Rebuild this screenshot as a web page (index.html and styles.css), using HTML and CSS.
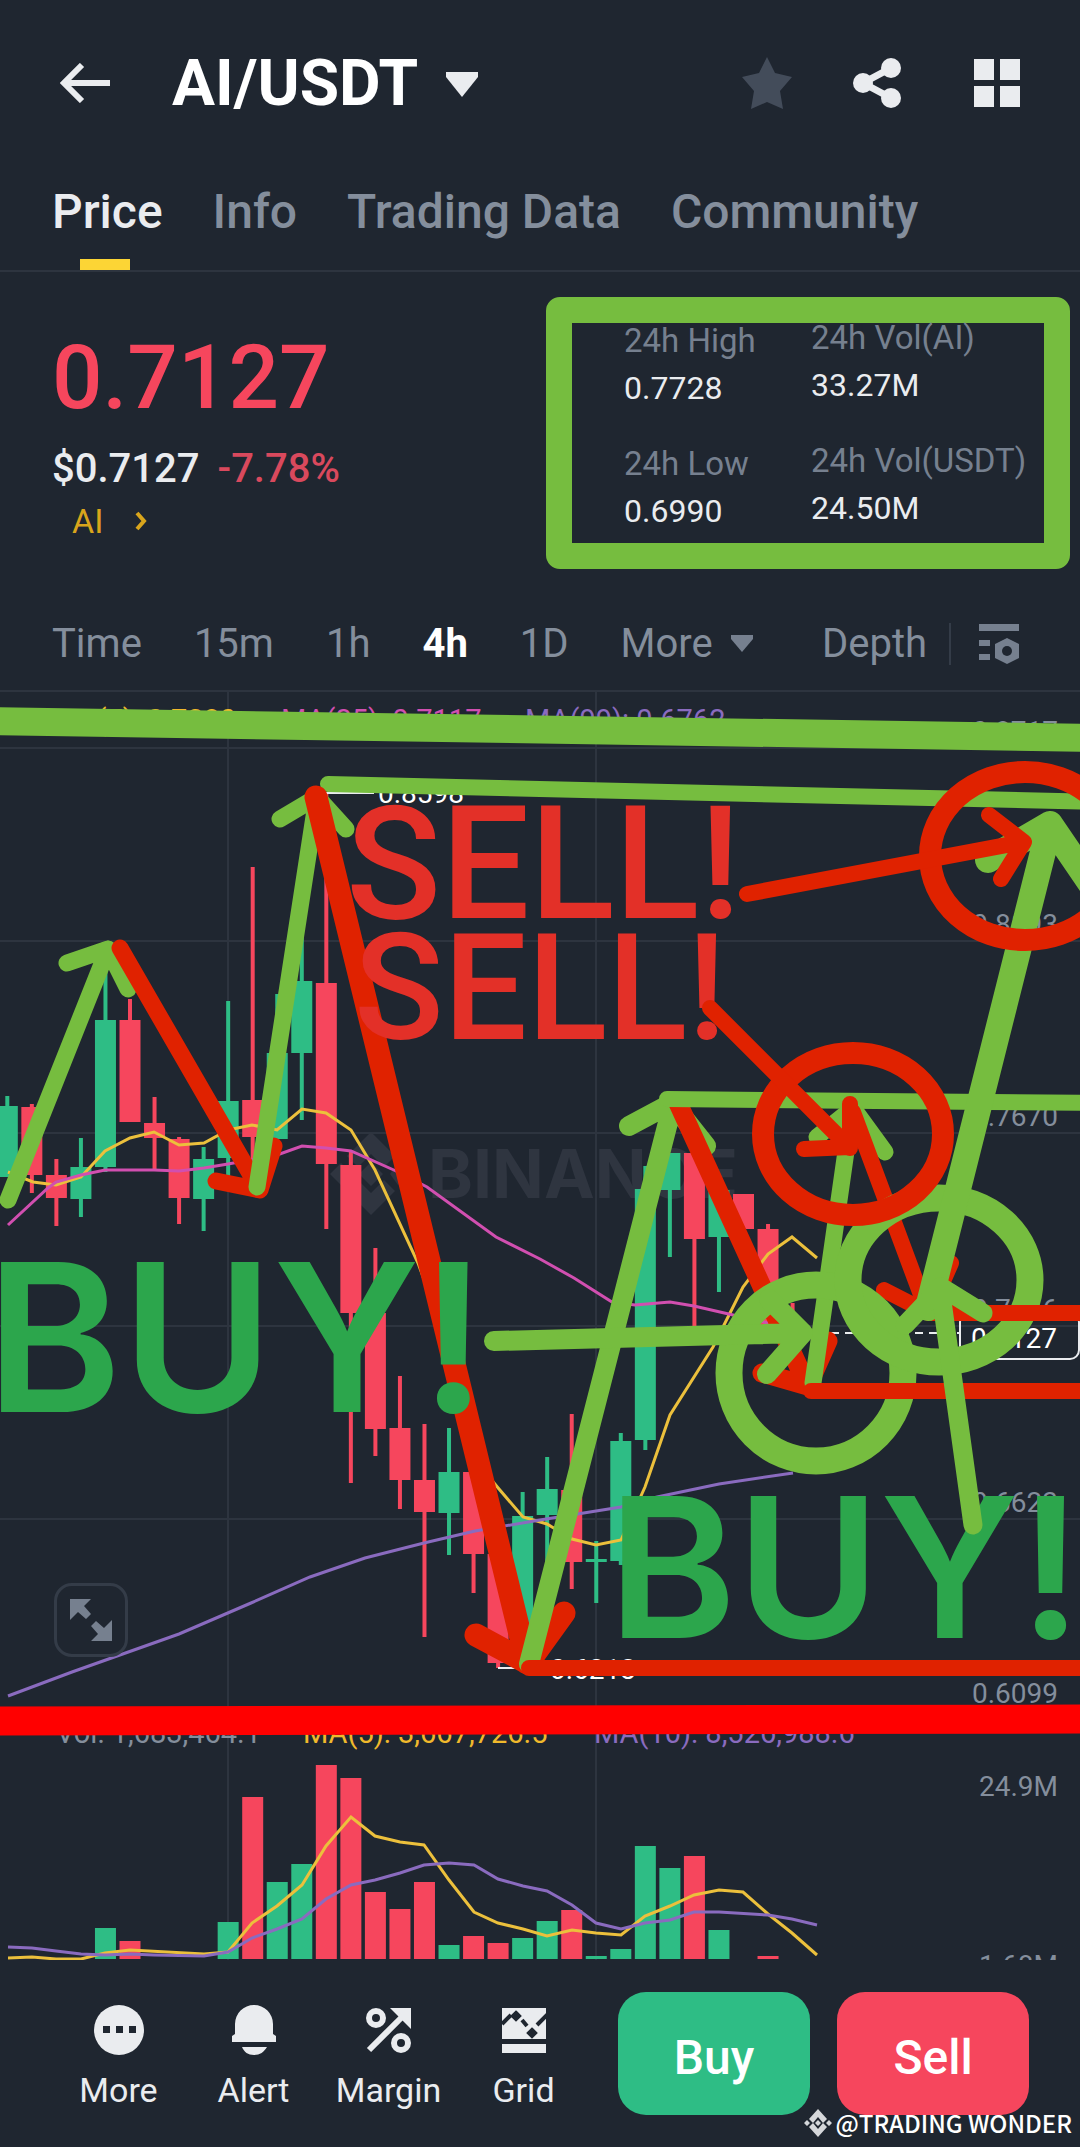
FILE: index.html
```html
<!DOCTYPE html>
<html lang="en">
<head>
<meta charset="utf-8">
<meta name="viewport" content="width=device-width, initial-scale=1">
<title>AI/USDT</title>
<link rel="stylesheet" href="styles.css">
</head>
<body>
<div class="app">
  <header class="topbar">
    <button class="icon-btn" aria-label="Back">
      <svg width="50" height="40" viewBox="0 0 50 40"><path d="M50 20H6M22 2L4 20l18 18" fill="none" stroke="#eaecef" stroke-width="6"/></svg>
    </button>
    <button class="pair">AI/USDT
      <svg width="32" height="25" viewBox="0 0 32 25"><path d="M0 0h32v5L16 25 0 5z" fill="#eaecef"/></svg>
    </button>
    <div class="actions">
      <button class="icon-btn" aria-label="Favourite">
        <svg width="50" height="52" viewBox="0 0 50 52"><path d="M25 0l8 16 17 4-12 14 3 18-16-7-16 7 3-18L0 20l17-4z" fill="#434c5a"/></svg>
      </button>
      <button class="icon-btn" aria-label="Share">
        <svg width="50" height="52" viewBox="0 0 50 52"><path d="M39 11L11 26l28 15" fill="none" stroke="#eaecef" stroke-width="7"/><g fill="#eaecef"><circle cx="39" cy="11" r="10"/><circle cx="11" cy="26" r="10"/><circle cx="39" cy="41" r="10"/></g></svg>
      </button>
      <button class="icon-btn" aria-label="Layout">
        <svg width="46" height="48" viewBox="0 0 46 48"><path d="M0 0h20v21H0zM26 0h20v21H26zM0 27h20v21H0zM26 27h20v21H26z" fill="#eaecef"/></svg>
      </button>
    </div>
  </header>

  <nav class="tabs">
    <a href="#price" class="tab tab-on">Price</a>
    <a href="#info" class="tab">Info</a>
    <a href="#data" class="tab">Trading Data</a>
    <a href="#community" class="tab">Community</a>
  </nav>

  <section class="summary">
    <div class="quote">
      <div class="last">0.7127</div>
      <div class="sub"><span>$0.7127</span><span class="down">-7.78%</span></div>
      <a class="tag" href="#ai">AI <svg width="12" height="20" viewBox="0 0 12 20"><path d="M2 2l7 8-7 8" fill="none" stroke="#d9a51c" stroke-width="4"/></svg></a>
    </div>
    <dl class="stats">
      <div class="col">
        <div><dt>24h High</dt><dd>0.7728</dd></div>
        <div><dt>24h Low</dt><dd>0.6990</dd></div>
      </div>
      <div class="col col-raised">
        <div><dt>24h Vol(AI)</dt><dd>33.27M</dd></div>
        <div><dt>24h Vol(USDT)</dt><dd>24.50M</dd></div>
      </div>
    </dl>
  </section>

  <div class="intervals">
    <button>Time</button>
    <button>15m</button>
    <button>1h</button>
    <button class="on">4h</button>
    <button>1D</button>
    <button>More <svg width="22" height="17" viewBox="0 0 22 17"><path d="M0 0h22v4L11 17 0 4z" fill="#76808f"/></svg></button>
    <button class="depth">Depth</button>
    <span class="rule"></span>
    <button aria-label="Chart settings"><svg width="40" height="40" viewBox="0 0 40 40"><path d="M0 0h40v7H0zM0 16h11v6H0zM0 30h11v6H0zM28 14l12 6v14l-12 6-12-6V20z" fill="#76808f"/><circle cx="28" cy="27" r="5" fill="#1f2630"/></svg></button>
  </div>

  <section class="chart">
    <svg class="plot" viewBox="0 690 1080 1270">
      <g class="grid"><path d="M0 691H1080M0 748H1080M0 941H1080M0 1133H1080M0 1326H1080M0 1519H1080M228 691V1960M596 691V1960"/></g>
      <g class="brand">
        <path d="M347 1156l24-24 24 24-11 11-13-13-13 13zM347 1191l24 24 24-24-11-11-13 13-13-13zM371 1162l12 12-12 12-12-12zM330 1174l11-11 11 11-11 11zM390 1174l8-11 11 11-11 11z"/>
        <text x="428" y="1198">BINANCE</text>
      </g>
      <g class="axis">
        <text x="1058" y="741">0.8717</text>
        <text x="1058" y="934">0.8193</text>
        <text x="1058" y="1126">0.7670</text>
        <text x="1058" y="1319">0.7146</text>
        <text x="1058" y="1512">0.6623</text>
        <text x="1058" y="1703">0.6099</text>
        <text x="1058" y="1796">24.9M</text>
        <text x="1058" y="1975">1.68M</text>
      </g>
      <g id="candles"></g>
      <g class="ma">
        <polyline class="y" points="8,1172 33,1182 56,1185 81,1177 105,1151 130,1138 154,1132 179,1145 204,1143 228,1130 252,1125 277,1130 302,1109 326,1113 351,1130 375,1170 418,1263 450,1350 475,1460 499,1489 523,1517 547,1524 572,1539 596,1545 621,1540 645,1487 670,1415 713,1347 743,1287 768,1254 792,1237 817,1258"/>
        <polyline class="m" points="8,1225 48,1188 56,1182 81,1175 105,1170 154,1170 179,1171 204,1168 228,1164 277,1155 302,1146 326,1148 351,1151 396,1171 427,1187 496,1237 540,1259 574,1278 612,1302 635,1305 670,1302 694,1306 733,1315 768,1323"/>
        <polyline class="v" points="8,1696 72,1672 179,1634 251,1603 310,1577 365,1558 424,1543 475,1531 540,1520 621,1507 657,1497 719,1484 793,1473"/>
        <polyline class="y" points="8,1958 32,1957 56,1959 81,1959 105,1953 130,1950 204,1954 228,1952 252,1923 277,1906 302,1885 326,1846 351,1817 375,1836 400,1842 424,1845 449,1880 474,1912 498,1923 523,1929 547,1936 572,1930 596,1933 621,1935 645,1916 670,1906 694,1895 719,1890 743,1892 768,1914 792,1933 817,1955"/>
        <polyline class="v" points="8,1947 32,1948 56,1951 81,1954 105,1955 130,1954 154,1955 204,1956 228,1952 252,1938 277,1929 302,1919 326,1899 351,1885 375,1880 400,1873 424,1865 449,1863 474,1865 498,1879 523,1886 547,1891 572,1905 596,1923 621,1929 645,1923 670,1920 694,1912 719,1912 768,1915 792,1919 817,1925"/>
      </g>
      <g class="legend">
        <text x="52" y="730" class="ty">MA(7): 0.7380</text>
        <text x="281" y="730" class="tm">MA(25): 0.7117</text>
        <text x="525" y="730" class="tv">MA(99): 0.6762</text>
        <text x="56" y="1743" class="tg">Vol: 1,683,464.1</text>
        <text x="303" y="1743" class="ty">MA(5): 3,667,726.5</text>
        <text x="594" y="1743" class="tv">MA(10): 8,526,988.6</text>
      </g>
      <g class="marks">
        <path d="M326 793H374M498 1668H546"/>
        <path d="M817 1333H960" stroke-dasharray="8 6"/>
        <rect x="960" y="1313" width="119" height="46" rx="9"/>
        <text x="378" y="803">0.8598</text>
        <text x="550" y="1679">0.6213</text>
        <text x="971" y="1348">0.7127</text>
      </g>

      <g class="ink">
        <path class="g" stroke-width="28" d="M-20 721L1100 738"/>
        <path class="g" stroke-width="17" d="M8 1200L108 949M67 963L108 949L128 989"/>
        <path class="r" stroke-width="17" d="M120 948L259 1189M216 1181L260 1190L274 1146"/>
        <path class="g" stroke-width="17" d="M257 1187L317 797M280 819L317 797L346 829"/>
        <path class="g" stroke-width="16" d="M328 784L540 789L1100 802"/>
        <path class="r" stroke-width="23" d="M316 797L527 1663M476 1635L528 1663L564 1613"/>
        <path class="g" stroke-width="20" d="M529 1664L673 1103M629 1126L672 1103L706 1146"/>
        <path class="r" stroke-width="19" d="M678 1103L806 1383M762 1373L808 1386L828 1341"/>
        <path class="g" stroke-width="16" d="M667 1099L1100 1103"/>
        <path class="g" stroke-width="17" d="M813 1383L852 1109M817 1137L853 1108L885 1152"/>
        <path class="r" stroke-width="16" d="M853 1112L927 1311M884 1290L929 1313L951 1263"/>
        <ellipse class="g" stroke-width="27" cx="816" cy="1373" rx="87" ry="88"/>
        <ellipse class="g" stroke-width="27" cx="939" cy="1280" rx="91" ry="82"/>
        <path class="r" stroke-width="16" d="M811 1391H1100M529 1668H1100M929 1313H1100"/>
        <path class="g" stroke-width="26" d="M928 1308L1050 824M988 860L1050 824L1095 890"/>
        <text class="sell sell-far" x="346" y="918">SELL!</text>
        <text class="sell sell-near" x="354" y="1039">SELL!</text>
        <text class="buy buy-left" x="-14" y="1412">BUY!</text>
        <text class="buy buy-right" x="608" y="1638">BUY!</text>
        <ellipse class="r" stroke-width="22" cx="853" cy="1134" rx="90" ry="81"/>
        <ellipse class="r" stroke-width="22" cx="1025" cy="856" rx="95" ry="84"/>
        <path class="r" stroke-width="16" d="M710 1008L850 1148M804 1149L850 1147V1104M747 894L1023 842M989 815L1024 842L1001 879"/>
        <path class="g" stroke-width="20" d="M494 1341L802 1333M769 1299L803 1333L767 1374"/>
        <path class="g" stroke-width="19" d="M973 1525L940 1287M905 1325L941 1287L983 1313"/>
        <path class="stop" stroke-width="29" d="M-20 1721L1100 1719"/>
      </g>
    </svg>
    <button class="expand" aria-label="Full screen">
      <svg width="42" height="42" viewBox="0 0 42 42"><path d="M0 0h21l-7 7 7 8-5 5-8-7-8 8zM42 42H21l7-7-7-8 5-5 8 7 8-8z" fill="#76808f"/></svg>
    </button>
  </section>

  <footer class="dock">
    <button class="tool"><svg width="50" height="50" viewBox="0 0 50 50"><circle cx="25" cy="25" r="25" fill="#eaecef"/><path d="M9 21h7v7H9zM22 21h7v7h-7zM35 21h7v7h-7z" fill="#1f2630"/></svg>More</button>
    <button class="tool"><svg width="50" height="50" viewBox="0 0 50 50"><path d="M6 29V19a19 19 0 0 1 38 0v10l3 2v6H3v-6l3-2zM13 42h25c-3 5-7 8-13 8s-10-3-12-8z" fill="#eaecef"/></svg>Alert</button>
    <button class="tool"><svg width="50" height="50" viewBox="0 0 50 50"><g fill="none" stroke="#eaecef" stroke-width="6"><circle cx="12" cy="13" r="7"/><circle cx="37" cy="38" r="7"/><path d="M5 45L38 12"/></g><path d="M26 3h21v21z" fill="#eaecef"/></svg>Margin</button>
    <button class="tool"><svg width="50" height="50" viewBox="0 0 50 50"><path d="M3 3h44v31H3zM3 39h44v9H3z" fill="#eaecef"/><path d="M3 19l9-9M38 20l11-11M17 8l3 3-3 3-3-3zM23 15l5 6M33 25l3 3-3 3-3-3z" stroke="#1f2630" stroke-width="4" fill="#1f2630"/></svg>Grid</button>
    <button class="trade buy-btn">Buy</button>
    <button class="trade sell-btn">Sell</button>
  </footer>

  <div class="credit">
    <svg width="28" height="28" viewBox="0 0 28 28"><path d="M5 10l9-10 9 10-4 4-5-6-5 6zM5 18l9 10 9-10-4-4-5 6-5-6zM14 11l3 3-3 3-3-3zM0 14l3-3 3 3-3 3zM22 14l3-3 3 3-3 3z" fill="#d5d7da"/></svg>
    <span>@TRADING WONDER</span>
  </div>
</div>
<script src="chart.js"></script>
</body>
</html>
```
FILE: styles.css
```css
* { box-sizing: border-box; }
body { margin: 0; background: #1f2630; color: #eaecef; font-family: Roboto, "Noto Sans", sans-serif; }
button { background: none; border: 0; padding: 0; margin: 0; color: inherit; font: inherit; }
a { color: inherit; text-decoration: none; }
svg { display: block; flex: none; }
.app { position: relative; }

.topbar { display: flex; align-items: center; height: 166px; padding: 0 60px; }
.pair { display: flex; align-items: center; gap: 28px; margin-left: 62px; padding-top: 2px; font-size: 64px; font-weight: 700; line-height: 72px; color: #fff; }
.actions { display: flex; align-items: center; gap: 60px; margin-left: auto; }
.actions .icon-btn:last-child { margin-left: 12px; }

.tabs { display: flex; gap: 50px; height: 106px; padding: 18px 52px 0; border-bottom: 2px solid #2d343f; font-size: 48px; font-weight: 500; line-height: 56px; color: #848e9c; }
.tab { position: relative; }
.tab-on { color: #eaecef; }
.tab-on::after { content: ""; position: absolute; left: 50%; bottom: 0; width: 50px; margin-left: -27px; height: 11px; background: #fcd535; }

.summary { display: flex; justify-content: space-between; padding: 25px 10px 0 52px; height: 325px; }
.quote { padding-top: 28px; }
.last { font-size: 89px; font-weight: 500; line-height: 106px; color: #f6465d; }
.sub { display: flex; gap: 18px; font-size: 40px; line-height: 48px; font-weight: 500; margin-top: 14px; }
.down { color: #d9495d; }
.tag { display: flex; align-items: center; gap: 32px; margin: 8px 0 0 20px; font-size: 34px; line-height: 40px; color: #d9a51c; }
.stats { display: flex; gap: 56px; margin: 0; width: 524px; height: 272px; border: 26px solid #76bd3f; border-radius: 14px; padding: 0 0 0 52px; white-space: nowrap; }
.col { display: flex; flex-direction: column; gap: 34px; width: 131px; margin-top: -2px; }
.col-raised { margin-top: -5px; }
.stats dt { font-size: 33px; line-height: 40px; color: #76808f; }
.stats dd { margin: 0; padding-top: 5px; font-size: 32px; line-height: 44px; }

.intervals { display: flex; align-items: center; height: 93px; padding: 0 61px 0 52px; gap: 52px; font-size: 40px; line-height: 48px; color: #848e9c; }
.intervals button { display: flex; align-items: center; gap: 18px; }
.intervals .on { color: #fff; font-weight: 700; }
.intervals .depth { margin-left: auto; }
.rule { flex: none; width: 2px; height: 42px; margin: 0 -24px 0 -30px; background: #343c48; }

.chart { position: relative; }
.plot { width: 100%; height: auto; overflow: hidden; }
.plot text { font-size: 28px; }
.grid path { stroke: #2d343f; stroke-width: 2; }
.brand { fill: #2f3540; }
.plot .brand text { font-family: Inter, sans-serif; font-size: 68px; font-weight: 700; }
.axis { fill: #848e9c; text-anchor: end; }
.up { fill: #2ebd85; }
.dn { fill: #f6465d; }
.ma { fill: none; stroke-width: 3; }
.ma .y { stroke: #ecc03c; }
.ma .m { stroke: #d14fb0; }
.ma .v { stroke: #8a6bbf; }
.plot .legend text { font-size: 29px; }
.ty { fill: #f0b92c; }
.tm { fill: #d14fb0; }
.tv { fill: #8a6bbf; }
.tg { fill: #848e9c; }
.marks { fill: none; stroke: #eaecef; stroke-width: 2; }
.marks text { fill: #fff; stroke: none; }
.ink { fill: none; stroke-linecap: round; stroke-linejoin: round; }
.ink .g { stroke: #76bd3f; }
.ink .r { stroke: #e02200; }
.ink .stop { stroke: #f00; }
.ink .sell { fill: #e33028; font-weight: 500; }
.ink .buy { fill: #2ca64c; font-family: Inter, sans-serif; font-weight: 600; }
.ink .sell-far { font-size: 157px; }
.ink .sell-near { font-size: 148px; }
.ink .buy-left { font-size: 206px; }
.ink .buy-right { font-size: 195px; }
.expand { position: absolute; left: 54px; top: 893px; width: 74px; height: 74px; display: flex; align-items: center; justify-content: center; border: 3px solid #343c48; border-radius: 18px; }

.dock { display: flex; align-items: flex-start; height: 187px; padding: 32px 51px 0 51px; font-size: 34px; line-height: 40px; }
.tool { display: flex; flex-direction: column; align-items: center; gap: 15px; width: 135px; padding-top: 13px; }
.trade { flex: 1; height: 123px; padding-top: 8px; border-radius: 28px; font-size: 48px; font-weight: 500; color: #fff; }
.buy-btn { margin-left: 27px; background: #2ebd85; }
.sell-btn { margin-left: 27px; background: #f6465d; }
.credit { position: absolute; right: 8px; bottom: 6px; display: flex; align-items: center; gap: 4px; font-family: "Noto Sans CJK SC", sans-serif; font-size: 24px; line-height: 36px; font-weight: 500; color: #fff; }
```
FILE: chart.js
```javascript
// One candle per row: [slot, direction, body top, body bottom, wick top, wick bottom]
const candles = [
  [0, 1, 1106, 1177, 1096, 1177], [1, 0, 1107, 1175, 1104, 1193], [2, 0, 1175, 1198, 1159, 1226],
  [3, 1, 1167, 1199, 1138, 1217], [4, 1, 1020, 1167, 950, 1172], [5, 0, 1020, 1122, 999, 1122],
  [6, 0, 1123, 1138, 1097, 1170], [7, 0, 1139, 1198, 1137, 1224], [8, 1, 1159, 1199, 1147, 1231],
  [9, 1, 1101, 1158, 1001, 1180], [10, 0, 1100, 1137, 867, 1180], [11, 1, 1053, 1139, 994, 1139],
  [12, 1, 981, 1053, 900, 1120], [13, 0, 983, 1164, 793, 1229], [14, 0, 1165, 1313, 1152, 1483],
  [15, 0, 1313, 1429, 1248, 1456], [16, 0, 1428, 1480, 1376, 1509], [17, 0, 1480, 1512, 1424, 1637],
  [18, 1, 1472, 1513, 1428, 1555], [19, 0, 1472, 1554, 1472, 1593], [20, 0, 1554, 1663, 1554, 1668],
  [21, 1, 1516, 1655, 1492, 1655], [22, 1, 1489, 1515, 1457, 1580], [23, 0, 1490, 1562, 1414, 1589],
  [24, 1, 1559, 1562, 1541, 1603], [25, 1, 1441, 1561, 1433, 1565], [26, 1, 1189, 1440, 1166, 1450],
  [27, 1, 1153, 1190, 1153, 1257], [28, 0, 1153, 1239, 1153, 1328], [29, 1, 1190, 1237, 1190, 1292],
  [30, 0, 1194, 1229, 1194, 1229], [31, 0, 1229, 1326, 1224, 1326], [32, 0, 1326, 1344, 1303, 1344]
];
// Volume bars: [slot, direction, top]
const volumes = [
  [4, 1, 1928], [5, 0, 1941], [9, 1, 1922], [10, 0, 1797], [11, 1, 1882], [12, 1, 1864], [13, 0, 1765],
  [14, 0, 1778], [15, 0, 1892], [16, 0, 1909], [17, 0, 1882], [18, 1, 1945], [19, 0, 1936], [20, 0, 1943],
  [21, 1, 1938], [22, 1, 1921], [23, 0, 1910], [24, 1, 1956], [25, 1, 1949], [26, 1, 1846], [27, 1, 1868],
  [28, 0, 1856], [29, 1, 1930], [31, 0, 1956]
];
const layer = document.getElementById('candles');
function bar(x, y, w, h, up) {
  const r = document.createElementNS('http://www.w3.org/2000/svg', 'rect');
  r.setAttribute('x', x);
  r.setAttribute('y', y);
  r.setAttribute('width', w);
  r.setAttribute('height', h);
  r.setAttribute('class', up ? 'up' : 'dn');
  layer.appendChild(r);
}
const center = slot => 7.3 + slot * 24.54;
candles.forEach(([s, up, t, b, wt, wb]) => {
  bar(center(s) - 2, wt, 4, wb - wt, up);
  bar(center(s) - 10.5, t, 21, b - t, up);
});
volumes.forEach(([s, up, t]) => bar(center(s) - 10.5, t, 21, 1959 - t, up));
```
